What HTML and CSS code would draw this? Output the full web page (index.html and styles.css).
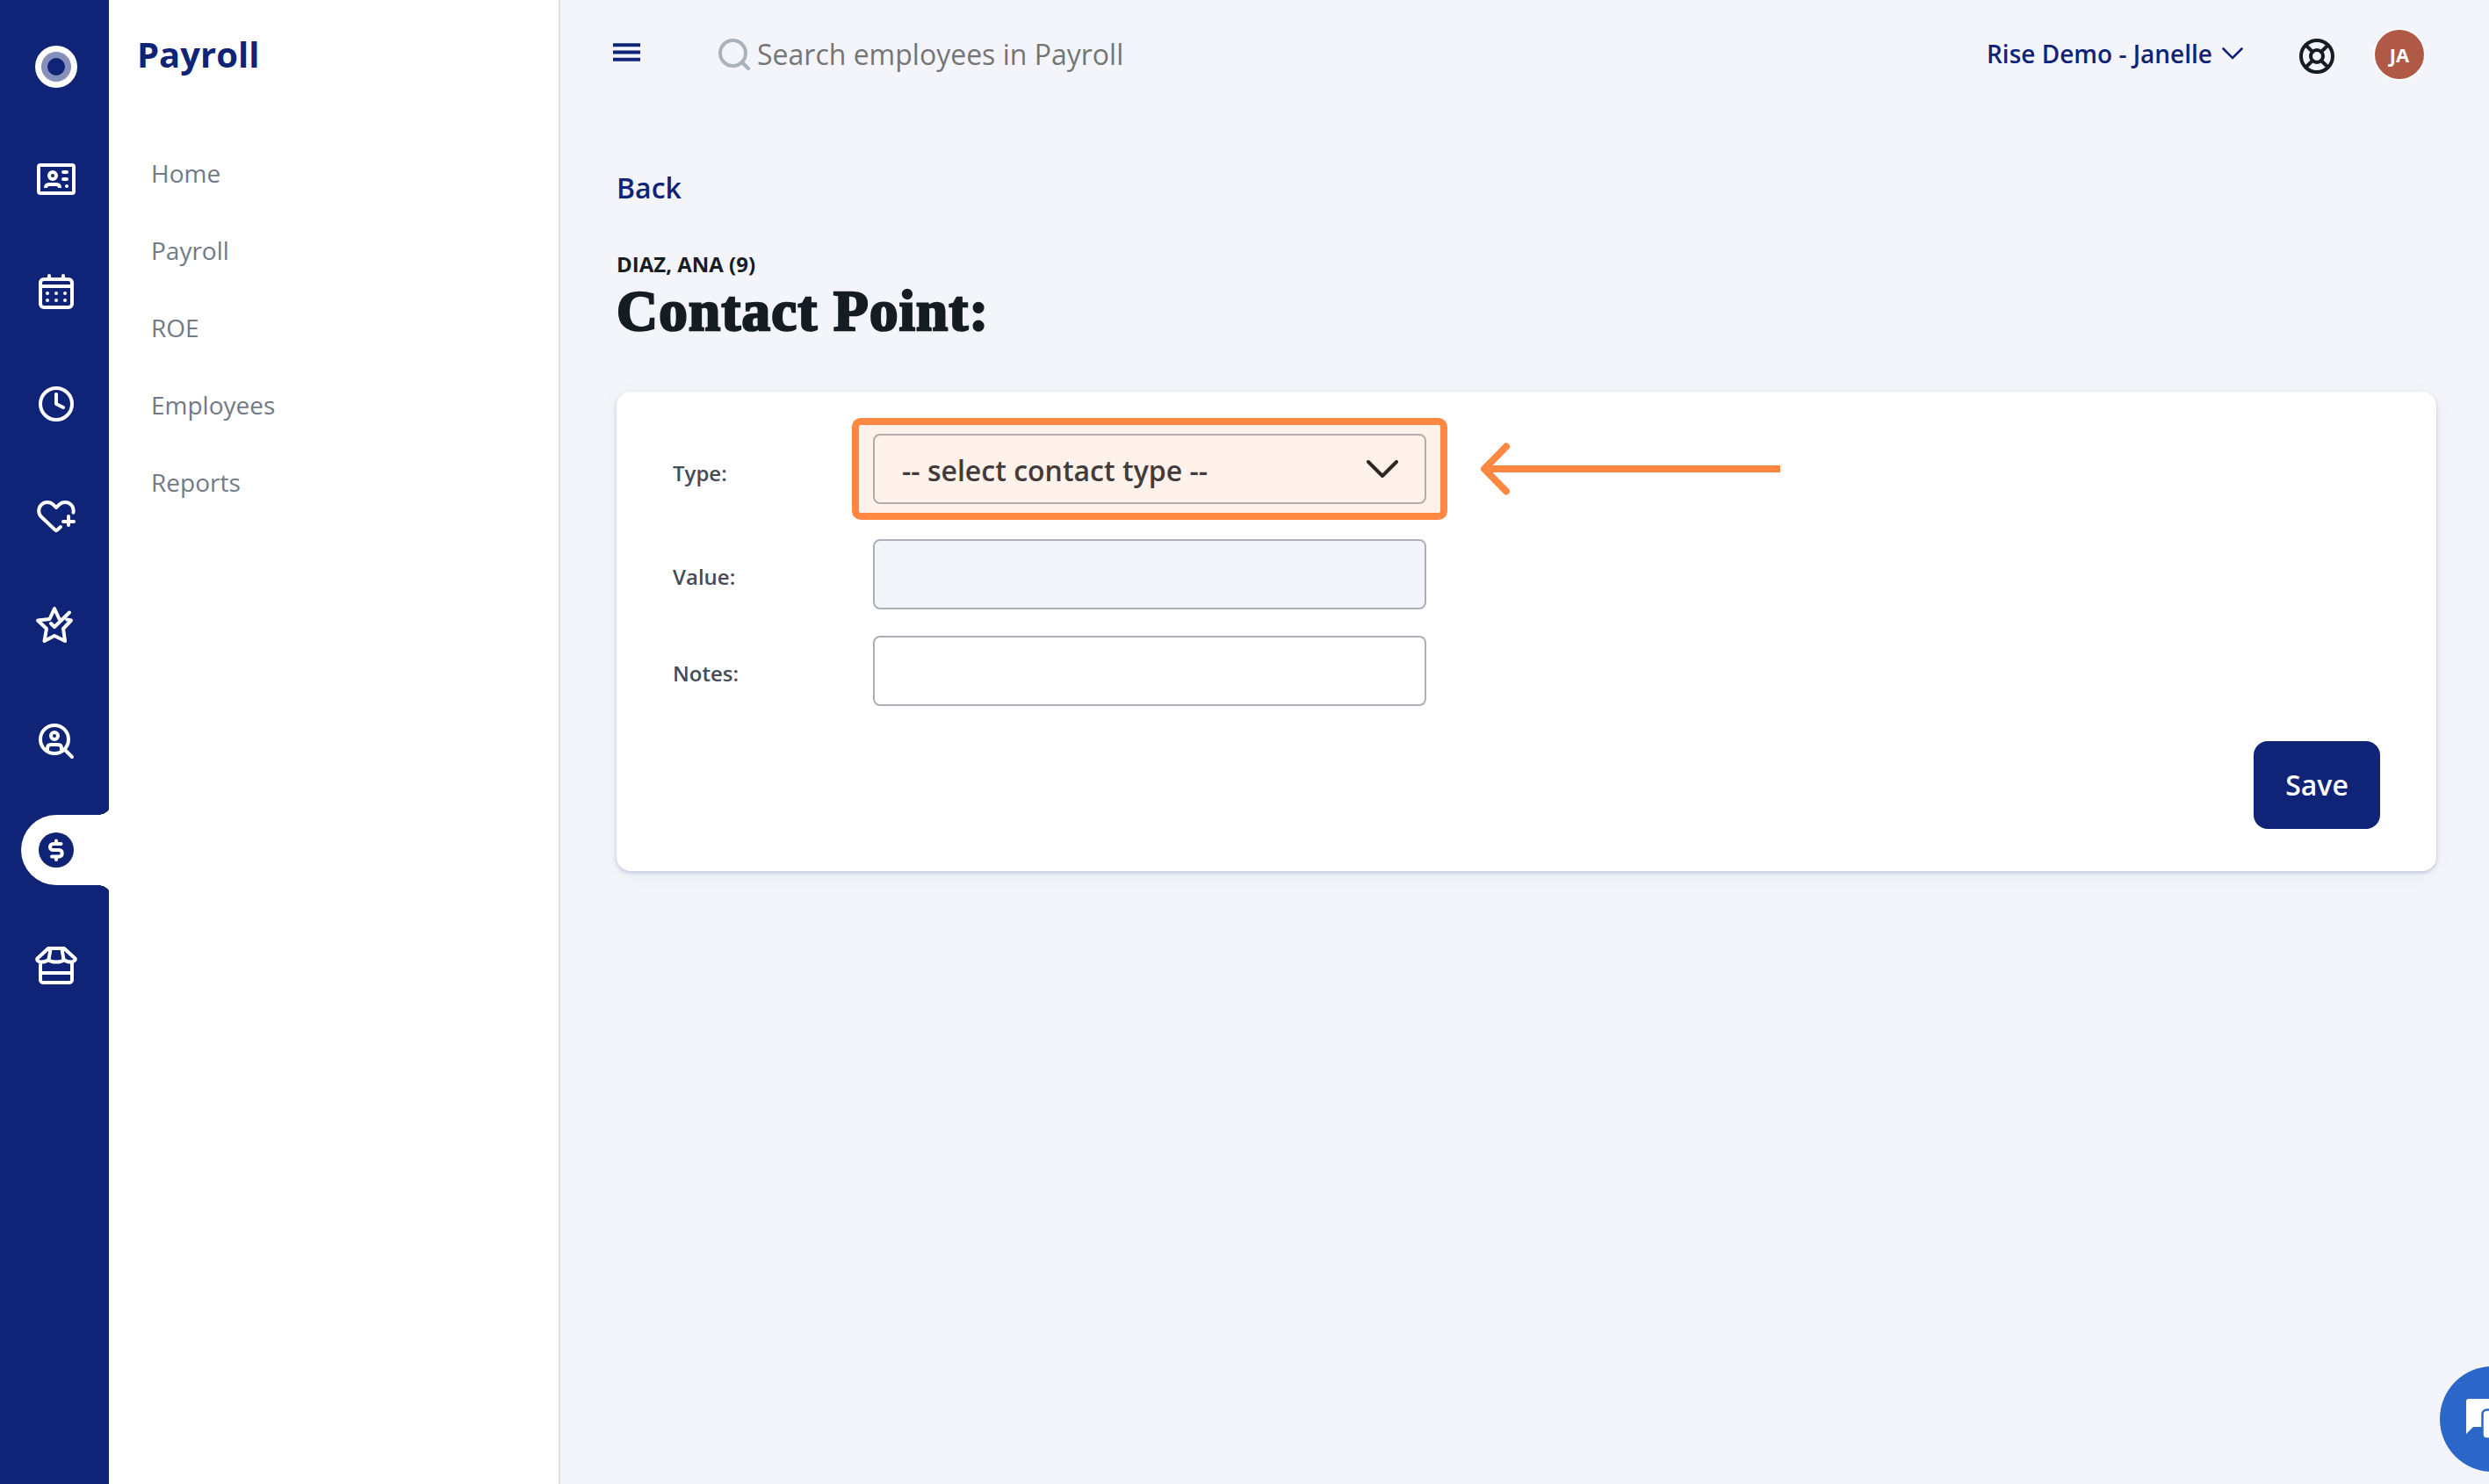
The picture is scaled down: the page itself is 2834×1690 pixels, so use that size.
FILE: index.html
```html
<!DOCTYPE html>
<html lang="en">
<head>
<meta charset="utf-8">
<title>Payroll</title>
<link rel="stylesheet" href="styles.css">
</head>
<body>
<div class="app">
  <nav class="rail">
    <svg class="logo" viewBox="0 0 48 48"><circle cx="24" cy="24" r="24" fill="#fff"/><circle cx="24" cy="24" r="17" fill="#8790ba"/><circle cx="24" cy="24" r="10" fill="#0f2476"/></svg>
    <a class="rail-item people"><svg viewBox="0 0 48 48"><rect x="4" y="8" width="40" height="32" rx="2"/><circle cx="20" cy="20" r="4"/><path d="M12 34c0-3 2-4 4-4h8c2 0 4 1 4 4" stroke-linecap="butt"/><path d="M32 16h4M32 24h4"/><circle class="dot" cx="36" cy="32" r="2"/></svg></a>
    <a class="rail-item calendar"><svg viewBox="0 0 48 48"><rect x="6" y="10" width="36" height="32" rx="4"/><path d="M6 18h36M16 6v4M32 6v4"/><g class="dot"><circle cx="14" cy="26" r="2"/><circle cx="24" cy="26" r="2"/><circle cx="34" cy="26" r="2"/><circle cx="14" cy="34" r="2"/><circle cx="24" cy="34" r="2"/><circle cx="34" cy="34" r="2"/></g></svg></a>
    <a class="rail-item clock"><svg viewBox="0 0 48 48"><circle cx="24" cy="24" r="18"/><path d="M24 13v11l8 4"/></svg></a>
    <a class="rail-item heart"><svg viewBox="0 0 48 48"><path d="M29 36l-3.600 3.400a2 2 0 0 1-2.800 0L7 24.500a9.800 9.800 0 0 1 0-13.700a9.800 9.800 0 0 1 13.800 0L24 14l3.200-3.200a9.800 9.800 0 0 1 13.800 0c2.500 2.600 3 5.600 2.500 9"/><path d="M38 24v10M32 30h12"/></svg></a>
    <a class="rail-item star"><svg viewBox="0 0 48 48"><path d="M39 9.500L22 26l-4-4"/><path d="M30 18l-2.500-1L22 5l-5.500 12L3 18.500l10 9.500L10.500 42L22 36l12 6l-2-14l9-9.500l-5-1"/></svg></a>
    <a class="rail-item recruit"><svg viewBox="0 0 48 48"><circle cx="22" cy="22" r="16"/><circle cx="22" cy="18" r="4"/><path d="M14 34v-2c0-3 1.500-4 4-4h8c2.500 0 4 1 4 4v2M34 34l8 8"/></svg></a>
    <a class="rail-item payroll active"><svg viewBox="0 0 48 48"><circle class="coin" cx="24" cy="24" r="20"/><path d="M29.500 17H20.500a3.500 3.500 0 0 0 0 7h7a3.800 3.800 0 0 1 0 7.500H19M24 13.500v3M24 32v3" stroke="#fff"/></svg></a>
    <a class="rail-item store"><svg viewBox="0 0 48 48"><path d="M6 20v20a3 3 0 0 0 3 3h30a3 3 0 0 0 3-3V20M6 32h36M15 4h18l12.500 11.500c1 2-2 4-4.500 4c-3 0-6-.5-8-2.500c-2 2-5 2.500-9 2.500s-7-.5-9-2.500c-2 2-5 2.500-8 2.500c-3.500 0-5.500-2-4.500-4zM17.500 5L15.500 17M30.500 5l2 12"/></svg></a>
  </nav>
  <aside class="panel">
    <h2 class="panel-title">Payroll</h2>
    <a class="panel-link">Home</a>
    <a class="panel-link">Payroll</a>
    <a class="panel-link">ROE</a>
    <a class="panel-link">Employees</a>
    <a class="panel-link">Reports</a>
  </aside>
  <main class="main">
    <header class="topbar">
      <svg class="burger" viewBox="0 0 32 22"><path d="M0 3h32M0 11.500h32M0 20h32"/></svg>
      <svg class="search-icon" viewBox="0 0 36 36"><circle cx="16.500" cy="16.500" r="14.500"/><path d="M27 27l7 7"/></svg>
      <span class="search-text">Search employees in Payroll</span>
      <span class="company">Rise Demo - Janelle</span>
      <svg class="caret" viewBox="0 0 24 14"><path d="M1.500 1.500L12 12L22.500 1.500"/></svg>
      <svg class="help" viewBox="0 0 40 40"><circle cx="20" cy="20" r="18"/><circle cx="20" cy="20" r="7"/><path d="M8 8l7 7M32 8l-7 7M8 32l7-7M32 32l-7-7"/></svg>
      <span class="avatar">JA</span>
    </header>
    <a class="back">Back</a>
    <div class="employee">DIAZ, ANA (9)</div>
    <h1 class="title">Contact Point:</h1>
    <form class="card">
      <div class="row type"><label>Type:</label>
        <div class="field select"><span>-- select contact type --</span><svg viewBox="0 0 36 20"><path d="M2 2l16 16L34 2"/></svg><i class="highlight"></i></div>
        <svg class="arrow" viewBox="0 0 344 60"><path d="M6 30H342" stroke-linecap="butt"/><path d="M30 4.500L5 30l25 25.500"/></svg>
      </div>
      <div class="row value"><label>Value:</label><div class="field disabled"></div></div>
      <div class="row notes"><label>Notes:</label><div class="field"></div></div>
      <button class="save" type="button">Save</button>
    </form>
  </main>
</div>
<div class="chat"><svg viewBox="0 0 120 120"><path fill="#fff" d="M33 37h45v32H38l-8 8V40q0-3 3-3z"/><rect x="48.500" y="49.500" width="46" height="33" rx="5" fill="#fff" stroke="#2a67c8" stroke-width="2.500"/></svg></div>
</body>
</html>
```
FILE: styles.css
```css
* { box-sizing: border-box; }
body { margin: 0; width: 2834px; height: 1690px; overflow: hidden; font-family: "Open Sans", "Noto Sans", sans-serif; background: #f3f5fa; color: #161c23; }
.app { display: flex; height: 1690px; }

.rail { width: 124px; flex: none; background: #0f2476; display: flex; flex-direction: column; padding-top: 52px; }
.logo { width: 48px; height: 48px; margin-left: 40px; }
.rail-item { display: block; width: 84px; height: 48px; margin-left: 40px; }
.rail-item svg { display: block; width: 48px; height: 48px; fill: none; stroke: #fff; stroke-width: 4; stroke-linecap: round; stroke-linejoin: round; }
.rail-item .dot { fill: #fff; stroke: none; }
.people, .calendar, .clock, .heart { margin-top: 80px; }
.star { margin-top: 76px; }
.recruit { margin-top: 84px; }
.active { position: relative; width: 100px; height: 80px; margin: 60px 0 0 24px; padding: 16px; background: #fff; border-radius: 40px 0 0 40px; }
.active::before, .active::after { content: ""; position: absolute; right: 0; width: 12px; height: 6px; }
.active::before { top: -6px; background: radial-gradient(ellipse 14px 12px at 0 -6px, transparent 97%, #fff 100%); }
.active::after { bottom: -6px; background: radial-gradient(ellipse 14px 12px at 0 12px, transparent 97%, #fff 100%); }
.rail-item .coin { fill: #0f2476; stroke: none; }
.store { margin-top: 68px; }

.panel { width: 514px; flex: none; background: #fff; border-right: 2px solid #dee0e5; padding: 34px 0 0 32px; }
.panel-title { margin: 0 0 83px; font-size: 40px; line-height: 56px; font-weight: 700; color: #0f2476; }
.panel-link { display: block; height: 48px; line-height: 48px; margin: 0 0 40px 16px; font-size: 28px; color: #717a85; }

.main { flex: 1; padding: 0 60px 0 64px; }
.topbar { display: flex; height: 124px; align-items: center; margin-right: 12px; }
.topbar svg { fill: none; stroke-linecap: round; flex: none; }
.topbar .burger { width: 31px; height: 22px; margin: 0 89px 6px -4px; stroke: #0f2476; stroke-width: 4; stroke-linecap: butt; }
.search-icon { width: 36px; height: 36px; stroke: #aab2bc; stroke-width: 4; }
.search-text { margin: 0 0 2px 8px; flex: 1; font-size: 32px; color: #757575; }
.company { margin-bottom: 2px; font-size: 28px; font-weight: 600; color: #0f2476; }
.caret { width: 24px; height: 14px; margin: 0 0 2px 11px; stroke: #0f2476; stroke-width: 2.600; }
.help { width: 40px; height: 40px; margin: 4px 44px 0 64px; stroke: #161c23; stroke-width: 4; }
.avatar { width: 60px; height: 60px; flex: none; border: 2px solid #fff; border-radius: 50%; background: #b15947; color: #fff; font-size: 22px; font-weight: 700; line-height: 56px; text-align: center; }
.back { display: block; margin-top: 66px; height: 48px; line-height: 48px; font-size: 32px; font-weight: 600; color: #0f2476; }
.employee { margin-top: 47px; height: 32px; line-height: 32px; font-size: 24px; font-weight: 700; }
.title { margin: 0; height: 76px; line-height: 74px; font-family: "Liberation Serif", serif; font-size: 65px; font-weight: 700; letter-spacing: 1.3px; -webkit-text-stroke: 2.6px #161c23; white-space: nowrap; }

.card { width: 2072px; height: 546px; margin-top: 53px; padding: 48px 64px; background: #fff; border-radius: 16px; box-shadow: 0 2px 4px rgba(15,36,118,.2), 0 4px 20px rgba(15,36,118,.05); display: flex; flex-direction: column; }
.row { display: flex; height: 80px; }
.row.value { margin-top: 40px; }
.row.notes { margin-top: 30px; }
.row label { width: 228px; padding-top: 27px; line-height: 32px; font-size: 24px; font-weight: 600; color: #444c56; }
.row.type label { padding-top: 29px; }
.field { width: 630px; height: 80px; border: 2px solid #aab0bb; border-radius: 8px; background: #fff; }
.disabled { background: #f3f5fa; }
.select { position: relative; display: flex; align-items: center; justify-content: space-between; padding: 0 30px 0 31px; font-size: 32px; font-weight: 600; color: #2c323b; }
.select span { padding-top: 2px; }
.select svg { width: 36px; height: 20px; fill: none; stroke: #161c23; stroke-width: 4; stroke-linecap: round; stroke-linejoin: round; }
.highlight { position: absolute; inset: -20px -26px; border: 8px solid #fe8842; border-radius: 10px; background: rgba(254,136,66,.11); background-clip: padding-box; }
.arrow { width: 344px; height: 60px; margin: 10px 0 0 61px; fill: none; stroke: #fe8842; stroke-width: 8; stroke-linecap: round; stroke-linejoin: round; }
.save { width: 144px; height: 100px; margin: 40px 0 0 auto; padding: 0 0 2px; border: 0; border-radius: 16px; background: #0f2476; color: #fff; font: 600 32px "Open Sans", sans-serif; }

.chat { position: fixed; left: 2778px; top: 1556px; width: 120px; height: 120px; border-radius: 50%; background: #2a67c8; }
.chat svg { display: block; }
```
